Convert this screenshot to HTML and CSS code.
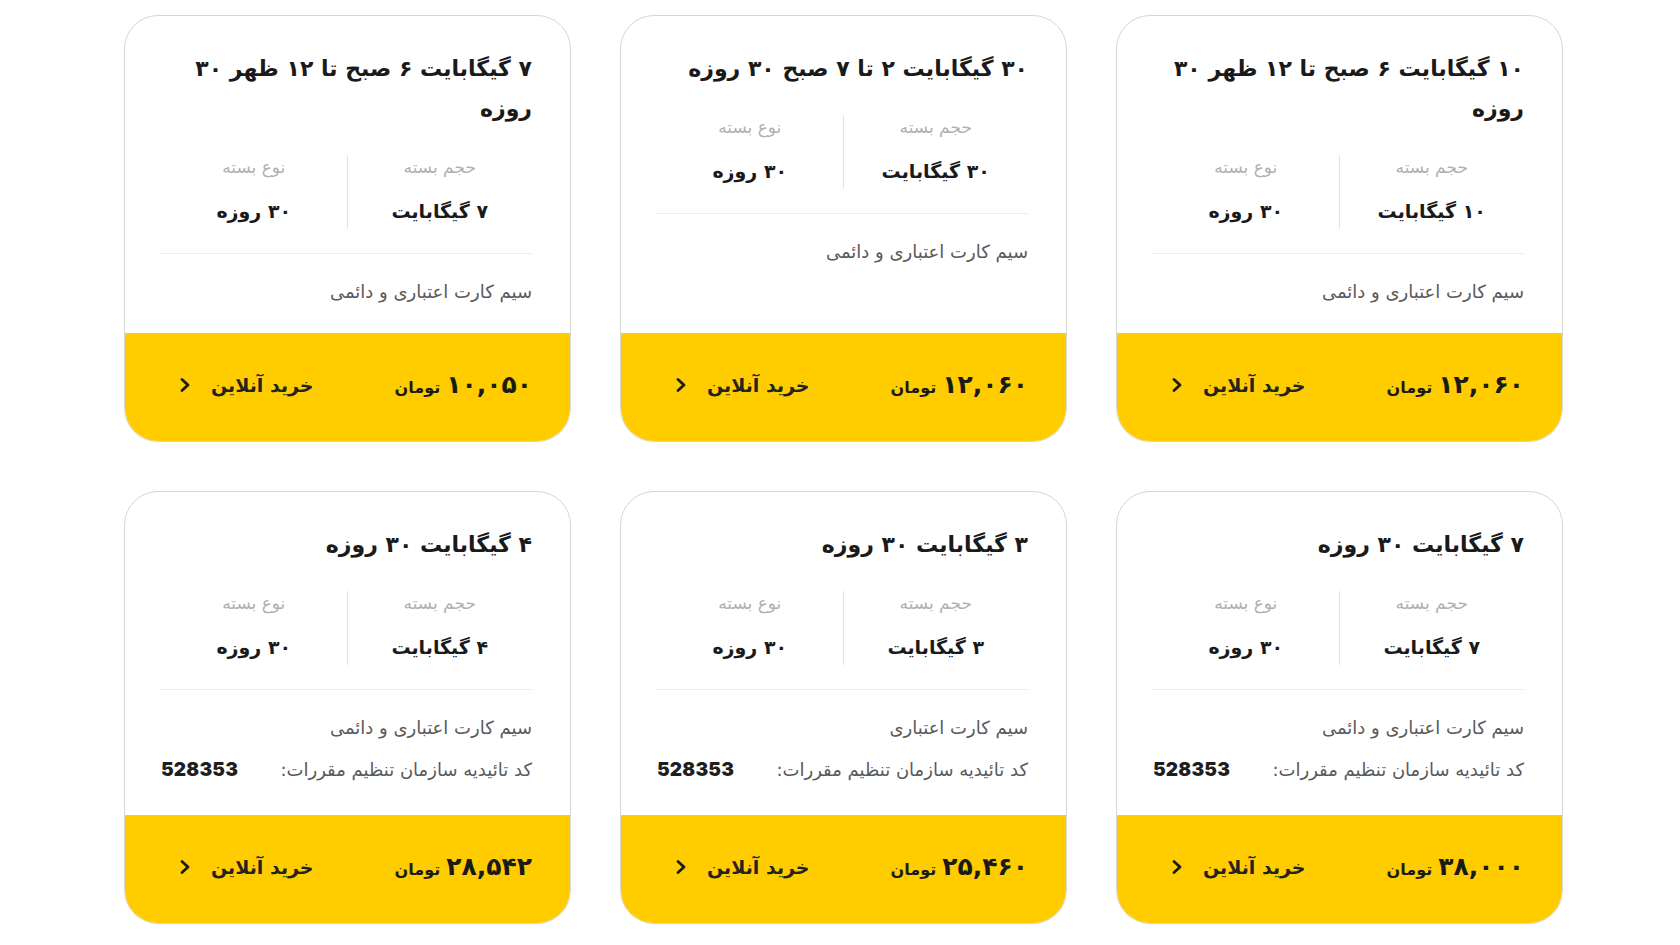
FILE: index.html
```html
<!DOCTYPE html>
<html lang="fa">
<head>
<meta charset="utf-8">
<title>بسته‌های اینترنت</title>
<link rel="stylesheet" href="styles.css">
</head>
<body>
<div class="grid" dir="rtl">

  <div class="card">
    <div class="card-body">
      <h3 class="title">۱۰ گیگابایت ۶ صبح تا ۱۲ ظهر ۳۰ روزه</h3>
      <div class="info">
        <div class="col"><div class="label">حجم بسته</div><div class="value">۱۰ گیگابایت</div></div>
        <div class="col"><div class="label">نوع بسته</div><div class="value">۳۰ روزه</div></div>
      </div>
      <p class="note">سیم کارت اعتباری و دائمی</p>
    </div>
    <div class="card-foot">
      <div class="price"><span class="amount">۱۲,۰۶۰</span> <span class="unit">تومان</span></div>
      <a class="buy" href="#">خرید آنلاین<svg class="chev" viewBox="0 0 12 16" width="12" height="16"><polyline points="3,2.5 9,8 3,13.5"/></svg></a>
    </div>
  </div>

  <div class="card">
    <div class="card-body">
      <h3 class="title">۳۰ گیگابایت ۲ تا ۷ صبح ۳۰ روزه</h3>
      <div class="info">
        <div class="col"><div class="label">حجم بسته</div><div class="value">۳۰ گیگابایت</div></div>
        <div class="col"><div class="label">نوع بسته</div><div class="value">۳۰ روزه</div></div>
      </div>
      <p class="note">سیم کارت اعتباری و دائمی</p>
    </div>
    <div class="card-foot">
      <div class="price"><span class="amount">۱۲,۰۶۰</span> <span class="unit">تومان</span></div>
      <a class="buy" href="#">خرید آنلاین<svg class="chev" viewBox="0 0 12 16" width="12" height="16"><polyline points="3,2.5 9,8 3,13.5"/></svg></a>
    </div>
  </div>

  <div class="card">
    <div class="card-body">
      <h3 class="title">۷ گیگابایت ۶ صبح تا ۱۲ ظهر ۳۰ روزه</h3>
      <div class="info">
        <div class="col"><div class="label">حجم بسته</div><div class="value">۷ گیگابایت</div></div>
        <div class="col"><div class="label">نوع بسته</div><div class="value">۳۰ روزه</div></div>
      </div>
      <p class="note">سیم کارت اعتباری و دائمی</p>
    </div>
    <div class="card-foot">
      <div class="price"><span class="amount">۱۰,۰۵۰</span> <span class="unit">تومان</span></div>
      <a class="buy" href="#">خرید آنلاین<svg class="chev" viewBox="0 0 12 16" width="12" height="16"><polyline points="3,2.5 9,8 3,13.5"/></svg></a>
    </div>
  </div>

  <div class="card">
    <div class="card-body">
      <h3 class="title">۷ گیگابایت ۳۰ روزه</h3>
      <div class="info">
        <div class="col"><div class="label">حجم بسته</div><div class="value">۷ گیگابایت</div></div>
        <div class="col"><div class="label">نوع بسته</div><div class="value">۳۰ روزه</div></div>
      </div>
      <p class="note">سیم کارت اعتباری و دائمی</p>
      <p class="note code"><span>کد تائیدیه سازمان تنظیم مقررات:</span><span class="code-num" dir="ltr">528353</span></p>
    </div>
    <div class="card-foot">
      <div class="price"><span class="amount">۳۸,۰۰۰</span> <span class="unit">تومان</span></div>
      <a class="buy" href="#">خرید آنلاین<svg class="chev" viewBox="0 0 12 16" width="12" height="16"><polyline points="3,2.5 9,8 3,13.5"/></svg></a>
    </div>
  </div>

  <div class="card">
    <div class="card-body">
      <h3 class="title">۳ گیگابایت ۳۰ روزه</h3>
      <div class="info">
        <div class="col"><div class="label">حجم بسته</div><div class="value">۳ گیگابایت</div></div>
        <div class="col"><div class="label">نوع بسته</div><div class="value">۳۰ روزه</div></div>
      </div>
      <p class="note">سیم کارت اعتباری</p>
      <p class="note code"><span>کد تائیدیه سازمان تنظیم مقررات:</span><span class="code-num" dir="ltr">528353</span></p>
    </div>
    <div class="card-foot">
      <div class="price"><span class="amount">۲۵,۴۶۰</span> <span class="unit">تومان</span></div>
      <a class="buy" href="#">خرید آنلاین<svg class="chev" viewBox="0 0 12 16" width="12" height="16"><polyline points="3,2.5 9,8 3,13.5"/></svg></a>
    </div>
  </div>

  <div class="card">
    <div class="card-body">
      <h3 class="title">۴ گیگابایت ۳۰ روزه</h3>
      <div class="info">
        <div class="col"><div class="label">حجم بسته</div><div class="value">۴ گیگابایت</div></div>
        <div class="col"><div class="label">نوع بسته</div><div class="value">۳۰ روزه</div></div>
      </div>
      <p class="note">سیم کارت اعتباری و دائمی</p>
      <p class="note code"><span>کد تائیدیه سازمان تنظیم مقررات:</span><span class="code-num" dir="ltr">528353</span></p>
    </div>
    <div class="card-foot">
      <div class="price"><span class="amount">۲۸,۵۴۲</span> <span class="unit">تومان</span></div>
      <a class="buy" href="#">خرید آنلاین<svg class="chev" viewBox="0 0 12 16" width="12" height="16"><polyline points="3,2.5 9,8 3,13.5"/></svg></a>
    </div>
  </div>

</div>
</body>
</html>
```

FILE: styles.css
```css
* { box-sizing: border-box; }

html, body {
  margin: 0;
  padding: 0;
  background: #ffffff;
}

body {
  font-family: "DejaVu Sans", "Noto Sans", sans-serif;
  color: #1f1f1f;
}

.grid {
  direction: rtl;
  display: grid;
  grid-template-columns: repeat(3, 447px);
  column-gap: 49px;
  row-gap: 49px;
  width: 1439px;
  margin: 15px 0 0 124px;
}

.card {
  display: flex;
  flex-direction: column;
  background: #ffffff;
  border: 1px solid #d6d6d6;
  border-radius: 34px;
  overflow: hidden;
}

.card-body {
  flex: 1;
  padding: 33px 38px 27px 36px;
}

.title {
  margin: 0 0 26px;
  font-size: 22px;
  line-height: 40px;
  font-weight: 700;
  color: #1a1a1a;
}

.info {
  display: grid;
  grid-template-columns: 1fr 1fr;
  padding-bottom: 24px;
  border-bottom: 1px solid #ececec;
}

.col {
  text-align: center;
  padding-bottom: 2px;
}

.col:first-child {
  border-left: 1px solid #e3e3e3;
}

.label {
  font-size: 17px;
  line-height: 24px;
  color: #b0b0b0;
  margin-bottom: 16px;
}

.value {
  font-size: 19px;
  line-height: 32px;
  font-weight: 700;
  color: #1a1a1a;
}

.note {
  margin: 24px 0 0;
  font-size: 18px;
  line-height: 28px;
  color: #5a5a5a;
}

.note.code {
  margin: 14px 0 4px;
  display: flex;
  justify-content: space-between;
  align-items: center;
}

.code-num {
  font-family: Inter, "Liberation Sans", sans-serif;
  font-weight: 900;
  font-size: 19px;
  color: #1f1f1f;
  letter-spacing: 0.2px;
}

.card-foot {
  height: 108px;
  flex: none;
  background: #ffcc00;
  display: flex;
  align-items: center;
  justify-content: space-between;
  padding: 0 38px 5px 54px;
}

.price {
  display: flex;
  align-items: baseline;
  gap: 6px;
  color: #1a1a1a;
  font-weight: 700;
}

.amount {
  font-size: 25px;
}

.unit {
  font-size: 16px;
}

.buy {
  display: flex;
  align-items: center;
  gap: 20px;
  text-decoration: none;
  color: #232323;
  font-size: 19px;
  font-weight: 700;
}

.chev {
  display: block;
  fill: none;
  stroke: #1c1c1c;
  stroke-width: 2.8;
  stroke-linecap: round;
  stroke-linejoin: round;
}
```
